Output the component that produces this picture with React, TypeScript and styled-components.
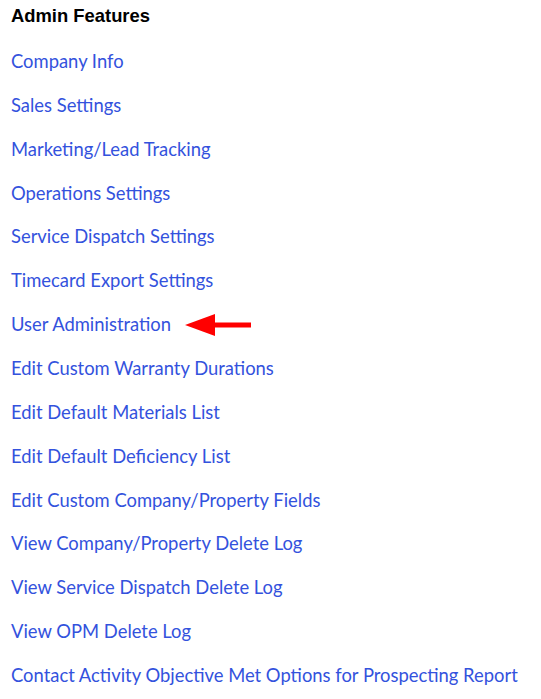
import * as React from 'react';
import styled, { createGlobalStyle } from 'styled-components';

const links = [
  'Company Info',
  'Sales Settings',
  'Marketing/Lead Tracking',
  'Operations Settings',
  'Service Dispatch Settings',
  'Timecard Export Settings',
  'User Administration',
  'Edit Custom Warranty Durations',
  'Edit Default Materials List',
  'Edit Default Deficiency List',
  'Edit Custom Company/Property Fields',
  'View Company/Property Delete Log',
  'View Service Dispatch Delete Log',
  'View OPM Delete Log',
  'Contact Activity Objective Met Options for Prospecting Report',
];

const App = () => {
  return (
    <Panel>
      <GlobalStyle />
      <Title>Admin Features</Title>
      <List>
        {links.map((label) => (
          <Item key={label}>
            <Link href="#">{label}</Link>
            {label === 'User Administration' && <Arrow />}
          </Item>
        ))}
      </List>
    </Panel>
  );
};

/** 빨간 화살표 */
const Arrow = () => (
  <ArrowSvg width="66" height="22" viewBox="0 0 66 22">
    <polygon points="0,11 30,0 30,22" fill="#f00" />
    <rect x="29" y="8.5" width="37" height="5" fill="#f00" />
  </ArrowSvg>
);

const GlobalStyle = createGlobalStyle`
  body {
    margin: 0;
    background: #fff;
  }
`;

const Panel = styled.div`
  padding: 5px 11px;
`;

const Title = styled.h3`
  margin: 0;
  height: 22px;
  font-family: 'Liberation Sans', Arial, sans-serif;
  font-size: 18.4px;
  font-weight: bold;
  line-height: 22px;
  color: #000;
`;

const List = styled.ul`
  list-style: none;
  margin: 0;
  padding: 12px 0 0;
`;

const Item = styled.li`
  display: flex;
  align-items: center;
  height: 43.86px;
`;

const Link = styled.a`
  font-family: Lato, sans-serif;
  font-size: 18.4px;
  color: #3352dd;
  text-decoration: none;

  &:visited {
    color: #3352dd;
  }
`;

const ArrowSvg = styled.svg`
  margin-left: 14px;
  margin-top: 2px;
`;

export default App;
